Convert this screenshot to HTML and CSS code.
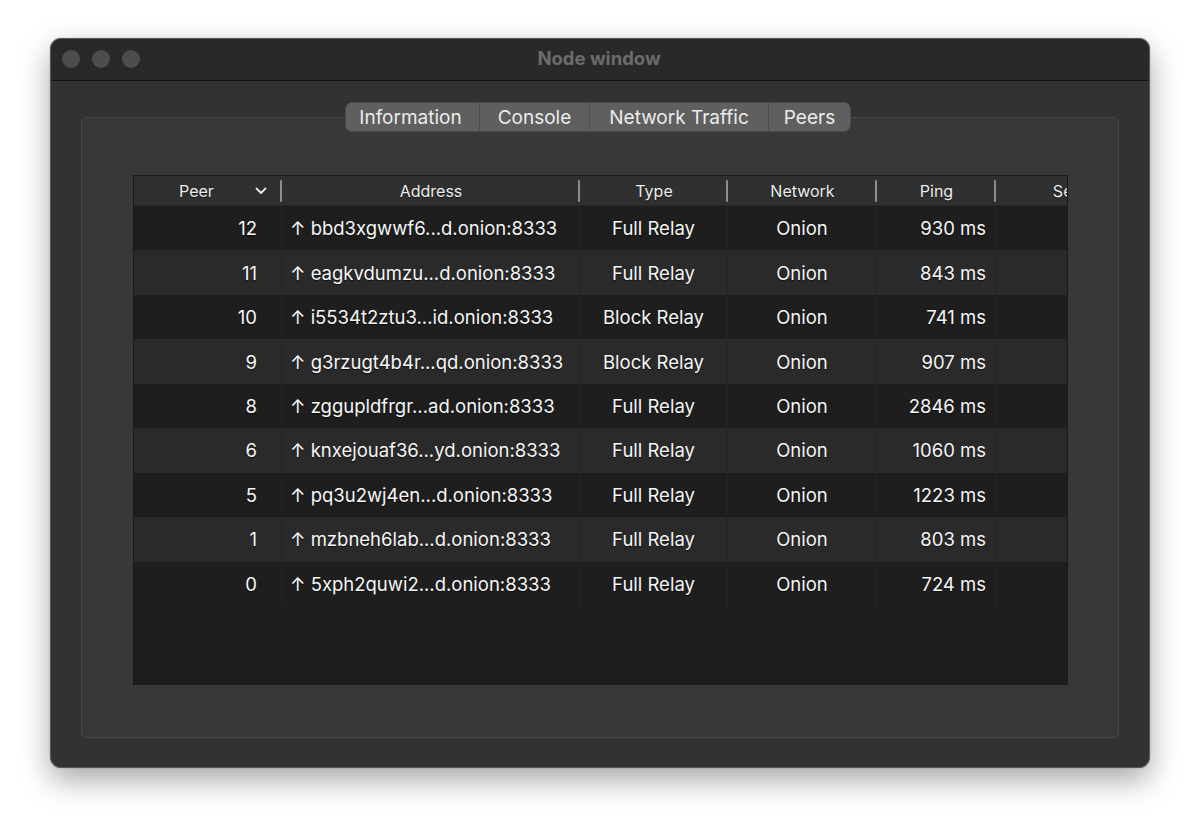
FILE: index.html
```html
<!DOCTYPE html>
<html>
<head>
<meta charset="utf-8">
<link rel="stylesheet" href="styles.css">
</head>
<body>
<div class="window">
  <div class="titlebar">
    <div class="lights"><span class="light"></span><span class="light"></span><span class="light"></span></div>
    <div class="title">Node window</div>
  </div>
  <div class="content">
    <div class="tabs">
      <div class="tab tab-info">Information</div>
      <div class="tab tab-console">Console</div>
      <div class="tab tab-net">Network Traffic</div>
      <div class="tab tab-peers">Peers</div>
    </div>
    <div class="group">
      <div class="table">
        <div class="row head">
          <div class="h h-peer"><span>Peer</span><svg class="chev" width="12" height="8" viewBox="0 0 12 8"><path d="M1.5 1.5 L6 6 L10.5 1.5" fill="none" stroke="#e6e6e6" stroke-width="1.8" stroke-linecap="round" stroke-linejoin="round"/></svg></div>
          <div class="h">Address</div>
          <div class="h">Type</div>
          <div class="h">Network</div>
          <div class="h">Ping</div>
          <div class="h h-last">Sent</div>
        </div>
        <div class="row odd"><div class="c c-peer">12</div><div class="c c-addr">↑ bbd3xgwwf6...d.onion:8333</div><div class="c c-type">Full Relay</div><div class="c c-net">Onion</div><div class="c c-ping">930 ms</div><div class="c c-sent"></div></div>
        <div class="row even"><div class="c c-peer">11</div><div class="c c-addr">↑ eagkvdumzu...d.onion:8333</div><div class="c c-type">Full Relay</div><div class="c c-net">Onion</div><div class="c c-ping">843 ms</div><div class="c c-sent"></div></div>
        <div class="row odd"><div class="c c-peer">10</div><div class="c c-addr">↑ i5534t2ztu3...id.onion:8333</div><div class="c c-type">Block Relay</div><div class="c c-net">Onion</div><div class="c c-ping">741 ms</div><div class="c c-sent"></div></div>
        <div class="row even"><div class="c c-peer">9</div><div class="c c-addr">↑ g3rzugt4b4r...qd.onion:8333</div><div class="c c-type">Block Relay</div><div class="c c-net">Onion</div><div class="c c-ping">907 ms</div><div class="c c-sent"></div></div>
        <div class="row odd"><div class="c c-peer">8</div><div class="c c-addr">↑ zggupldfrgr...ad.onion:8333</div><div class="c c-type">Full Relay</div><div class="c c-net">Onion</div><div class="c c-ping">2846 ms</div><div class="c c-sent"></div></div>
        <div class="row even"><div class="c c-peer">6</div><div class="c c-addr">↑ knxejouaf36...yd.onion:8333</div><div class="c c-type">Full Relay</div><div class="c c-net">Onion</div><div class="c c-ping">1060 ms</div><div class="c c-sent"></div></div>
        <div class="row odd"><div class="c c-peer">5</div><div class="c c-addr">↑ pq3u2wj4en...d.onion:8333</div><div class="c c-type">Full Relay</div><div class="c c-net">Onion</div><div class="c c-ping">1223 ms</div><div class="c c-sent"></div></div>
        <div class="row even"><div class="c c-peer">1</div><div class="c c-addr">↑ mzbneh6lab...d.onion:8333</div><div class="c c-type">Full Relay</div><div class="c c-net">Onion</div><div class="c c-ping">803 ms</div><div class="c c-sent"></div></div>
        <div class="row odd"><div class="c c-peer">0</div><div class="c c-addr">↑ 5xph2quwi2...d.onion:8333</div><div class="c c-type">Full Relay</div><div class="c c-net">Onion</div><div class="c c-ping">724 ms</div><div class="c c-sent"></div></div>
      </div>
    </div>
  </div>
</div>
</body>
</html>
```

FILE: styles.css
```css
* { box-sizing: border-box; }
html, body { margin: 0; padding: 0; }
body {
  background: #ffffff;
  width: 1200px;
  height: 830px;
  padding: 38px 50px;
  font-family: Inter, "Liberation Sans", sans-serif;
}
.window {
  width: 1100px;
  height: 730px;
  border-radius: 11px;
  background: #323232;
  border: 1px solid #5a5a5a;
  box-shadow: 0 12px 30px rgba(0,0,0,0.35), 0 0 1px rgba(0,0,0,0.6);
  overflow: hidden;
  display: flex;
  flex-direction: column;
}
.titlebar {
  height: 42px;
  flex: none;
  background: #29292a;
  border-bottom: 1px solid #121212;
  display: grid;
  grid-template-columns: 1fr;
  align-items: center;
}
.lights, .title { grid-area: 1 / 1; }
.lights {
  display: flex;
  gap: 12px;
  padding-left: 11px;
  padding-bottom: 2px;
}
.light {
  width: 18px;
  height: 18px;
  border-radius: 50%;
  background: #4d4d4f;
}
.title {
  text-align: center;
  color: #6c6c6c;
  font-weight: 700;
  font-size: 18.5px;
  padding-bottom: 3px;
  padding-right: 2px;
}
.content {
  flex: 1;
  padding: 21px 30px 29px 30px;
  display: flex;
  flex-direction: column;
  align-items: center;
}
.tabs {
  position: relative;
  z-index: 2;
  height: 30px;
  display: flex;
  background: #5f5f5f;
  border: 1px solid #4b4b4b;
  border-radius: 7px;
  margin-bottom: -15px;
  margin-right: 4px;
  overflow: hidden;
}
.tab {
  height: 100%;
  display: flex;
  align-items: center;
  justify-content: center;
  color: #ececec;
  font-size: 19px;
  border-right: 1px solid #505050;
}
.tab:last-child { border-right: none; }
.tab-info { width: 134px; padding-right: 4px; }
.tab-console { width: 110px; }
.tab-net { width: 179px; }
.tab-peers { width: 81px; }
.group {
  align-self: stretch;
  flex: 1;
  background: #383838;
  border: 1px solid #474747;
  border-radius: 5px;
  padding: 57px 51px 52px 51px;
}
.table {
  width: 935px;
  height: 510px;
  background: #1e1e1e;
  border: 1px solid #1a1a1a;
  overflow: hidden;
}
.row {
  display: grid;
  grid-template-columns: 148px 298px 148px 149px 119px 148px;
  height: 44.45px;
  align-items: stretch;
}
.row.head {
  height: 30px;
  background: #303030;
  border-bottom: 1px solid #2a2a2a;
}
.row.odd { background: #1e1e1e; }
.row.even { background: #2a2a2a; }
.c {
  display: flex;
  align-items: center;
  color: #f6f6f6;
  font-size: 18.5px;
  white-space: nowrap;
  border-right: 1px solid #242424;
  text-shadow: 0 1px 1px rgba(0,0,0,0.6);
}
.h {
  display: flex;
  align-items: center;
  justify-content: center;
  font-size: 16px;
  color: #ededed;
  white-space: nowrap;
  position: relative;
  text-shadow: 0 1px 1px rgba(0,0,0,0.6);
}
.h::after {
  content: "";
  position: absolute;
  right: 0;
  top: 4px;
  bottom: 3px;
  width: 2px;
  background: #8f8f8f;
  border-radius: 1px;
}
.h-last::after { display: none; }
.h.h-peer { justify-content: flex-start; padding-left: 45px; }
.chev { margin-left: 41px; margin-top: 1px; }
.c-peer { justify-content: flex-end; padding-right: 24px; }
.c-addr { padding-left: 8px; }
.c-type, .c-net { justify-content: center; }
.c-ping { justify-content: flex-end; padding-right: 9px; }
```
